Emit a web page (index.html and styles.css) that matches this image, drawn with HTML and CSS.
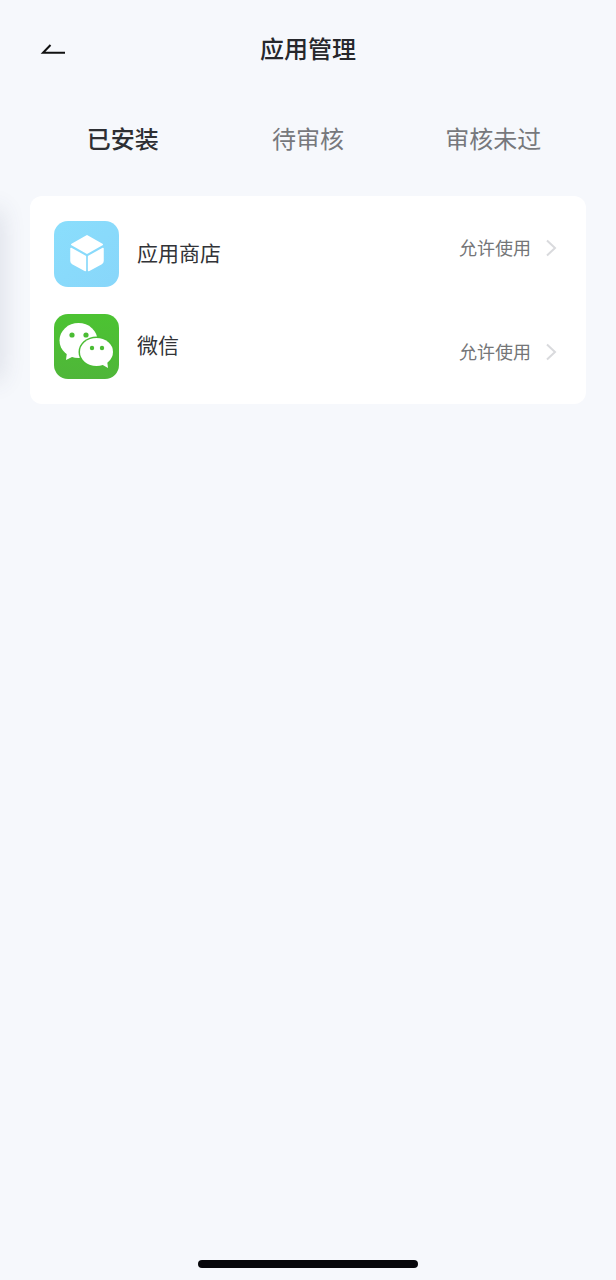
FILE: index.html
```html
<!DOCTYPE html>
<html lang="zh-CN">
<head>
  <meta charset="UTF-8"/>
  <meta name="viewport" content="width=device-width, initial-scale=1.0"/>
  <title>应用管理</title>
  <link rel="stylesheet" href="styles.css">
</head>
<body>
<div class="edge-shadow"></div>

<header class="top-bar">
  <button class="back" aria-label="返回">
    <svg width="26" height="14" viewBox="0 0 26 14">
      <path d="M10.5 3 L3 10.8 H25" fill="none" stroke="#111" stroke-width="2"/>
    </svg>
  </button>
  <h1>应用管理</h1>
</header>

<nav class="tabs">
  <div class="tab active">已安装</div>
  <div class="tab">待审核</div>
  <div class="tab">审核未过</div>
</nav>

<main class="card">
  <!-- app rows -->
  <div class="row">
    <div class="icon icon-store">
      <svg width="36" height="39" viewBox="0 0 36 39">
        <path d="M18 2 L33 10.5 L18 19 L3 10.5 Z" fill="#fff" stroke="#fff" stroke-width="2" stroke-linejoin="round"/>
        <path d="M2 14.5 L16.4 22.5 V36.5 L3.5 29.5 Q2 28.6 2 27 Z" fill="#fff" stroke="#fff" stroke-width="1.5" stroke-linejoin="round"/>
        <path d="M34 14.5 L19.6 22.5 V36.5 L32.5 29.5 Q34 28.6 34 27 Z" fill="#fff" stroke="#fff" stroke-width="1.5" stroke-linejoin="round"/>
      </svg>
    </div>
    <span class="name">应用商店</span>
    <span class="status status-up">允许使用</span>
    <svg class="arrow arrow-up" width="12" height="18" viewBox="0 0 12 18">
      <path d="M2 1.5 L10 9 L2 16.5" fill="none" stroke="#d9dadd" stroke-width="2"/>
    </svg>
  </div>
  <div class="row">
    <div class="icon icon-wechat">
      <svg width="65" height="65" viewBox="0 0 65 65">
        <ellipse cx="24.5" cy="26.5" rx="19" ry="17.5" fill="#fff"/>
        <path d="M13 38 L12 46 L22 41 Z" fill="#fff"/>
        <circle cx="18" cy="21" r="2.6" fill="#4abc33"/>
        <circle cx="32" cy="21" r="2.6" fill="#4abc33"/>
        <ellipse cx="42.5" cy="38" rx="18" ry="15.5" fill="#4abc33"/>
        <ellipse cx="42.5" cy="38" rx="16.5" ry="14" fill="#fff"/>
        <path d="M47 50 L54 54 L53 46 Z" fill="#fff"/>
        <circle cx="38" cy="34" r="2.2" fill="#4abc33"/>
        <circle cx="48" cy="34" r="2.2" fill="#4abc33"/>
      </svg>
    </div>
    <span class="name">微信</span>
    <span class="status status-down">允许使用</span>
    <svg class="arrow arrow-down" width="12" height="18" viewBox="0 0 12 18">
      <path d="M2 1.5 L10 9 L2 16.5" fill="none" stroke="#d9dadd" stroke-width="2"/>
    </svg>
  </div>
</main>

<div class="home-bar"></div>
</body>
</html>
```

FILE: styles.css
```css
* {
  box-sizing: border-box;
}

body {
  font-family: "Noto Sans CJK SC", "Liberation Sans", sans-serif;
  margin: 0;
  height: 1280px;
  overflow: hidden;
  background: #f6f8fc;
  color: #222;
  display: flex;
  flex-direction: column;
}

.edge-shadow {
  position: absolute;
  left: -14px;
  top: 210px;
  width: 14px;
  height: 170px;
  box-shadow: 0 0 24px rgba(60, 70, 100, 0.2);
}

.top-bar {
  height: 100px;
  padding-bottom: 4px;
  display: flex;
  align-items: center;
  justify-content: center;
  position: relative;
}

.top-bar h1 {
  margin: 0;
  font-size: 24px;
  font-weight: 500;
  line-height: 32px;
  color: #26272b;
}

.back {
  position: absolute;
  left: 40px;
  top: 42px;
  padding: 0;
  border: none;
  background: none;
  line-height: 0;
}

.tabs {
  display: grid;
  grid-template-columns: repeat(3, 1fr);
  margin: 0 30px;
  height: 78px;
  padding-top: 21px;
  text-align: center;
  font-size: 24px;
  line-height: 34px;
  color: #77787c;
}

.tab.active {
  color: #2e2f33;
  font-weight: 500;
}

.card {
  margin: 18px 30px 0;
  height: 208px;
  padding: 25px 29px 25px 24px;
  background: #fff;
  border-radius: 12px;
  display: flex;
  flex-direction: column;
  gap: 27px;
}

.row {
  display: flex;
  align-items: center;
  height: 65.5px;
}

.icon {
  width: 65px;
  height: 65.5px;
  border-radius: 14px;
  display: flex;
  align-items: center;
  justify-content: center;
  overflow: hidden;
  flex-shrink: 0;
}

.icon-store {
  background: linear-gradient(to bottom right, #8adefc, #88d6fa);
}

.icon-wechat {
  background: linear-gradient(to bottom, #4cc332, #4fb639);
}

.name {
  margin-left: 18px;
  padding-bottom: 4px;
  font-size: 21px;
  line-height: 30px;
  color: #323337;
  flex: 1;
}

.status {
  font-size: 18px;
  line-height: 26px;
  color: #747577;
}

.status-up {
  padding-bottom: 13px;
}

.status-down {
  padding-top: 9px;
}

.arrow {
  margin-left: 14px;
}

.arrow-up {
  margin-bottom: 11px;
}

.arrow-down {
  margin-top: 11px;
}

.home-bar {
  position: absolute;
  left: 198px;
  top: 1260px;
  width: 220px;
  height: 8px;
  border-radius: 4px;
  background: #07070b;
}
```
